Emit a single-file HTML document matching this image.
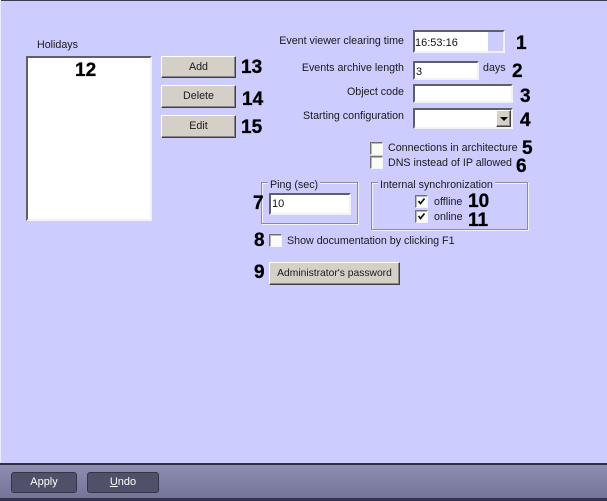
<!DOCTYPE html>
<html>
<head>
<meta charset="utf-8">
<style>
html,body{margin:0;padding:0;width:607px;height:501px;overflow:hidden}
body{position:relative;background:#ccccff;font-family:"Liberation Sans",sans-serif;font-size:10.7px;color:#1a1a1a}
div,span.a{position:absolute;box-sizing:border-box}
.t{white-space:nowrap;line-height:14px;height:14px}
.r{text-align:right}
.n{font-weight:bold;font-size:19px;line-height:22px;height:22px;color:#000;white-space:nowrap;-webkit-text-stroke:.3px #000}
.sunk{background:#fff;border:2px solid;border-color:#5f5f68 #f2f2f6 #f2f2f6 #5f5f68}
.btn{background:#d4d0c8;border:1px solid;border-color:#fff #404040 #404040 #fff;box-shadow:inset -1px -1px 0 #8a8880;text-align:center;color:#1a1a1a;white-space:nowrap}
.cb{background:#fbfbf6;border:1px solid;border-color:#6f6f76 #f4f4f8 #f4f4f8 #6f6f76;box-shadow:inset 1px 1px 0 #b8b8b4;width:13px;height:13px}
.grp{border:1px solid #8c8c94;box-shadow:1px 1px 0 #f2f2fb,inset 1px 1px 0 #f2f2fb}
.leg{background:#ccccff;padding:0 2px}
</style>
</head>
<body>
<div style="left:0;top:0;width:607px;height:1px;background:#3a3a50"></div>
<div style="left:0;top:0;width:1px;height:463px;background:#e8e8ff"></div>

<div class="t" style="left:37px;top:38px">Holidays</div>
<div class="sunk" style="left:26px;top:56px;width:126px;height:165px"></div>
<div class="n" style="left:75px;top:60px">12</div>

<div class="btn" style="left:161px;top:56px;width:75px;height:22px;line-height:20px">Add</div>
<div class="n" style="left:241px;top:57px">13</div>
<div class="btn" style="left:161px;top:85px;width:75px;height:23px;line-height:21px">Delete</div>
<div class="n" style="left:242px;top:89px">14</div>
<div class="btn" style="left:161px;top:115px;width:75px;height:23px;line-height:21px">Edit</div>
<div class="n" style="left:241px;top:117px">15</div>

<div class="t r" style="left:240px;top:34px;width:164px">Event viewer clearing time</div>
<div class="sunk" style="left:413px;top:30px;width:92px;height:23px;background:#ccccff"></div>
<div style="left:415px;top:32px;width:73px;height:19px;background:#fff"></div>
<div class="t" style="left:415px;top:36px;color:#111;font-size:11px">16:53:16</div>
<div class="n" style="left:516px;top:33px">1</div>

<div class="t r" style="left:240px;top:61px;width:164px">Events archive length</div>
<div class="sunk" style="left:413px;top:61px;width:66px;height:19px"></div>
<div class="t" style="left:416px;top:65px;color:#111;font-size:11px">3</div>
<div class="t" style="left:483px;top:61px">days</div>
<div class="n" style="left:512px;top:61px">2</div>

<div class="t r" style="left:240px;top:85px;width:164px">Object code</div>
<div class="sunk" style="left:413px;top:84px;width:100px;height:19px"></div>
<div class="n" style="left:520px;top:86px">3</div>

<div class="t r" style="left:240px;top:109px;width:164px">Starting configuration</div>
<div class="sunk" style="left:413px;top:108px;width:100px;height:21px"></div>
<div class="btn" style="left:496px;top:110px;width:15px;height:17px"></div>
<div style="left:500px;top:117px;width:0;height:0;border-left:4px solid transparent;border-right:4px solid transparent;border-top:4px solid #000"></div>
<div class="n" style="left:520px;top:110px">4</div>

<div class="cb" style="left:370px;top:142px"></div>
<div class="t" style="left:388px;top:141px">Connections in architecture</div>
<div class="n" style="left:522px;top:138px">5</div>
<div class="cb" style="left:370px;top:156px"></div>
<div class="t" style="left:388px;top:156px">DNS instead of IP allowed</div>
<div class="n" style="left:516px;top:156px">6</div>

<div class="grp" style="left:261px;top:182px;width:97px;height:42px"></div>
<div class="t leg" style="left:268px;top:178px">Ping (sec)</div>
<div class="sunk" style="left:269px;top:193px;width:82px;height:22px"></div>
<div class="t" style="left:272px;top:197px;color:#111;font-size:11px">10</div>
<div class="n" style="left:253px;top:193px">7</div>

<div class="grp" style="left:371px;top:182px;width:157px;height:48px"></div>
<div class="t leg" style="left:378px;top:178px">Internal synchronization</div>
<div class="cb" style="left:415px;top:195px"></div>
<svg style="position:absolute;left:415px;top:195px" width="13" height="13"><path d="M3.5 6l2 2.5 4-5" fill="none" stroke="#111" stroke-width="1.7"/></svg>
<div class="t" style="left:434px;top:195px">offline</div>
<div class="n" style="left:468px;top:191px">10</div>
<div class="cb" style="left:415px;top:210px"></div>
<svg style="position:absolute;left:415px;top:210px" width="13" height="13"><path d="M3.5 6l2 2.5 4-5" fill="none" stroke="#111" stroke-width="1.7"/></svg>
<div class="t" style="left:434px;top:210px">online</div>
<div class="n" style="left:468px;top:210px">11</div>

<div class="n" style="left:254px;top:230px">8</div>
<div class="cb" style="left:269px;top:234px"></div>
<div class="t" style="left:287px;top:234px">Show documentation by clicking F1</div>

<div class="n" style="left:254px;top:262px">9</div>
<div class="btn" style="left:269px;top:262px;width:131px;height:23px;line-height:21px;font-size:10.3px">Administrator's password</div>

<div style="left:0;top:463px;width:607px;height:2px;background:#2e2e44"></div>
<div style="left:0;top:465px;width:607px;height:33px;background:linear-gradient(#8e8eb0,#74749a)"></div>
<div style="left:0;top:498px;width:607px;height:3px;background:#33334a"></div>

<div style="left:11px;top:472px;width:66px;height:21px;background:#50506a;border:1px solid #35354a;border-radius:3px;color:#fff;text-align:center;line-height:19px;font-size:11px">Apply</div>
<div style="left:87px;top:472px;width:72px;height:21px;background:#50506a;border:1px solid #35354a;border-radius:3px;color:#fff;text-align:center;line-height:19px;font-size:11px"><u>U</u>ndo</div>
</body>
</html>
